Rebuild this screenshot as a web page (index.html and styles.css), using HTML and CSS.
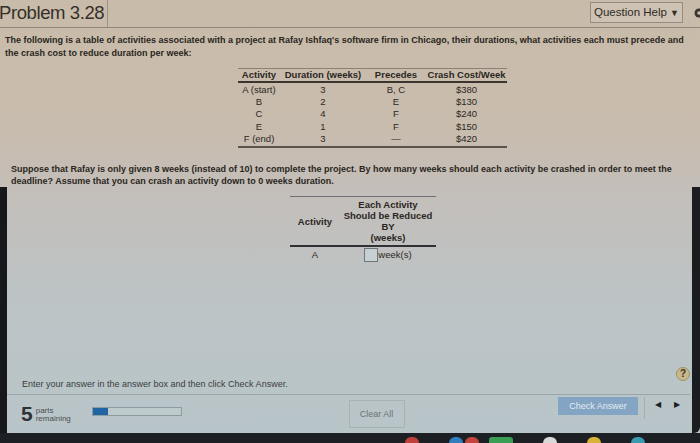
FILE: index.html
```html
<!DOCTYPE html>
<html>
<head>
<meta charset="utf-8">
<link rel="stylesheet" href="styles.css">
</head>
<body>
<div class="screen">
  <header class="topbar">
    <div class="title">Problem 3.28</div>
    <div class="topbar-right">
      <div class="help-btn">Question Help <span class="caret">&#9660;</span></div>
      <svg class="gear" width="10" height="14" viewBox="0 0 10 14"><circle cx="7" cy="7" r="4.5" fill="#3a352e"/><circle cx="7" cy="7" r="1.8" fill="#c6bcae"/></svg>
    </div>
  </header>

  <p class="intro">The following is a table of activities associated with a project at Rafay Ishfaq's software firm in Chicago, their durations, what activities each must precede and the crash cost to reduce duration per week:</p>

  <div class="table-wrap">
    <table class="data">
      <thead>
        <tr><th>Activity</th><th>Duration (weeks)</th><th>Precedes</th><th>Crash Cost/Week</th></tr>
      </thead>
      <tbody>
        <tr><td>A (start)</td><td>3</td><td>B, C</td><td>$380</td></tr>
        <tr><td>B</td><td>2</td><td>E</td><td>$130</td></tr>
        <tr><td>C</td><td>4</td><td>F</td><td>$240</td></tr>
        <tr><td>E</td><td>1</td><td>F</td><td>$150</td></tr>
        <tr><td>F (end)</td><td>3</td><td>&mdash;</td><td>$420</td></tr>
      </tbody>
    </table>
  </div>

  <p class="question">Suppose that Rafay is only given 8 weeks (instead of 10) to complete the project. By how many weeks should each activity be crashed in order to meet the deadline? Assume that you can crash an activity down to 0 weeks duration.</p>

  <div class="lower">
    <div class="answer-wrap">
      <table class="answer">
        <thead>
          <tr><th class="act">Activity</th><th class="reduce">Each Activity<br>Should be Reduced<br>BY<br>(weeks)</th></tr>
        </thead>
        <tbody>
          <tr><td>A</td><td><span class="box"></span>week(s)</td></tr>
        </tbody>
      </table>
    </div>

    <div class="spacer"></div>

    <div class="hint-row">
      <span class="hint">Enter your answer in the answer box and then click Check Answer.</span>
      <span class="qmark">?</span>
    </div>

    <div class="footer">
      <div class="parts">
        <span class="num">5</span>
        <span class="parts-txt">parts<br>remaining</span>
        <div class="progress"><div class="fill" style="width:15px"></div></div>
      </div>
      <div class="clear-btn">Clear All</div>
      <div class="nav">
        <div class="check-btn">Check Answer</div>
        <div class="arrows"><span>&#9664;</span><span>&#9654;</span></div>
      </div>
    </div>
  </div>

  <div class="taskbar">
    <span class="dot c-red"></span>
    <span class="dot c-blue"></span>
    <span class="dot c-red2"></span>
    <span class="pill c-green"></span>
    <span class="dot c-white"></span>
    <span class="dot c-yellow"></span>
    <span class="dot c-teal"></span>
  </div>
</div>
</body>
</html>
```

FILE: styles.css
```css
* { box-sizing: border-box; }
html, body { margin: 0; padding: 0; }
body {
  width: 700px;
  height: 443px;
  overflow: hidden;
  font-family: "Liberation Sans", Arial, sans-serif;
  color: #2b2722;
  background: #1b1d20;
}
.screen {
  width: 700px;
  height: 443px;
  display: flex;
  flex-direction: column;
  background: linear-gradient(180deg, #c9bba9 0%, #c8bcae 30%, #c3bfbb 45%, #bcc4c6 70%, #b8c5c9 100%);
}
.topbar {
  height: 28px;
  flex: none;
  display: flex;
  justify-content: space-between;
  align-items: stretch;
  border-bottom: 1px solid #8d867b;
}
.title {
  font-size: 18.5px;
  line-height: 25px;
  color: #34302a;
  padding: 0 3px 0 0;
  margin-left: -1px;
  border-right: 1px solid #9a9286;
  letter-spacing: -0.4px;
}
.topbar-right {
  display: flex;
  align-items: center;
  gap: 9px;
}
.help-btn {
  height: 21px;
  width: 93px;
  border: 1px solid #938c80;
  background: #cdc2b3;
  font-size: 11.5px;
  line-height: 19px;
  text-align: center;
  color: #2f2b26;
  margin-top: -2px;
}
.caret { font-size: 9px; }
.gear { margin-right: -2px; margin-top: -2px; }

.intro {
  margin: 6px 0 0 5px;
  width: 690px;
  font-size: 9px;
  font-weight: bold;
  line-height: 13px;
  color: #2a2621;
}
.table-wrap {
  display: flex;
  padding-left: 238px;
  margin-top: 8px;
}
.data {
  border-collapse: collapse;
  width: 269px;
  font-size: 9.5px;
}
.data th {
  font-weight: bold;
  border-top: 1px solid #8a8275;
  border-bottom: 2px solid #3a352f;
  padding: 1px 0 1px;
  line-height: 10px;
  white-space: nowrap;
}
.data td {
  text-align: center;
  line-height: 12.2px;
  padding: 0;
}
.data tbody tr:first-child td { padding-top: 1px; }
.data tbody tr:last-child td { border-bottom: 2px solid #5a544c; padding-bottom: 1px; }
.data th:nth-child(1), .data td:nth-child(1) { width: 42px; }
.data th:nth-child(2), .data td:nth-child(2) { width: 86px; }
.data th:nth-child(3), .data td:nth-child(3) { width: 60px; }

.question {
  margin: 15px 0 0 11px;
  width: 684px;
  font-size: 9px;
  font-weight: bold;
  line-height: 12px;
  color: #2a2621;
}
.lower {
  flex: 1;
  display: flex;
  flex-direction: column;
  border-left: 7px solid #15171a;
  border-right: 8px solid #1a1c1f;
  border-bottom-right-radius: 6px;
}
.answer-wrap {
  display: flex;
  padding-left: 283px;
  margin-top: 9px;
}
.answer {
  border-collapse: collapse;
  width: 146px;
  font-size: 9.5px;
}
.answer th {
  font-weight: bold;
  border-top: 1px solid #6d7072;
  border-bottom: 2px solid #2f3133;
  line-height: 11px;
  padding: 2px 0 2px;
}
.answer th.act { width: 50px; }
.answer td {
  text-align: center;
  padding: 1px 0 0;
  line-height: 14px;
}
.box {
  display: inline-block;
  width: 14px;
  height: 14px;
  border: 1px solid #6f7578;
  background: #c6cfd1;
  vertical-align: top;
}
.spacer { flex: 1; }
.hint-row {
  display: flex;
  justify-content: space-between;
  align-items: center;
  padding: 0 0 3px 15px;
  border-bottom: 1px solid #9aa5a9;
  margin-right: 2px;
}
.hint {
  font-size: 9px;
  color: #3a3d3f;
  margin-top: 10px;
}
.qmark {
  width: 14px;
  height: 14px;
  border-radius: 50%;
  background: #c7b98c;
  border: 1px solid #a09060;
  font-size: 10px;
  font-weight: bold;
  line-height: 12px;
  text-align: center;
  color: #3a3320;
  margin-bottom: 10px;
}
.footer {
  height: 38px;
  display: flex;
  align-items: center;
  justify-content: space-between;
  padding: 0 8px 0 14px;
}
.parts {
  display: flex;
  align-items: center;
  width: 320px;
}
.num {
  font-size: 21px;
  font-weight: bold;
  color: #2f3234;
  line-height: 20px;
}
.parts-txt {
  font-size: 8px;
  line-height: 8px;
  color: #4a4e51;
  margin-left: 3px;
  margin-top: 2px;
  width: 56px;
}
.progress {
  width: 90px;
  height: 9px;
  border: 1px solid #8d9ba3;
  background: #bfcacd;
  margin-top: -5px;
}
.fill {
  height: 100%;
  background: #1f64a3;
}
.clear-btn {
  width: 56px;
  height: 28px;
  border: 1px solid #a9b3b6;
  font-size: 9px;
  color: #6b7376;
  line-height: 26px;
  text-align: center;
  margin-right: 146px;
}
.nav {
  display: flex;
  align-items: flex-start;
  align-self: flex-start;
  margin-top: 2px;
}
.check-btn {
  width: 80px;
  height: 18px;
  background: #83a4c2;
  color: #e4ecf2;
  font-size: 9px;
  line-height: 18px;
  text-align: center;
}
.arrows {
  display: flex;
  gap: 13px;
  border-left: 1px solid #a3acaf;
  height: 22px;
  padding: 3px 4px 0 10px;
  margin-left: 6px;
  font-size: 8px;
  color: #1e2124;
}
.taskbar {
  height: 10px;
  flex: none;
  background: #1c1f23;
  display: flex;
  align-items: flex-end;
  gap: 30px;
  padding-left: 405px;
  overflow: hidden;
}
.dot {
  width: 14px;
  height: 6px;
  border-radius: 7px 7px 0 0;
  display: block;
}
.pill { width: 24px; height: 6px; display: block; border-radius: 3px 3px 0 0; }
.c-red { background: #c0403a; }
.c-blue { background: #2f7fbf; }
.c-red2 { background: #c4453e; margin-left: -28px; }
.c-green { background: #3a9e55; margin-left: -20px; }
.c-white { background: #d8d8d8; }
.c-yellow { background: #d9b23a; }
.c-teal { background: #3a9ab0; }
```
